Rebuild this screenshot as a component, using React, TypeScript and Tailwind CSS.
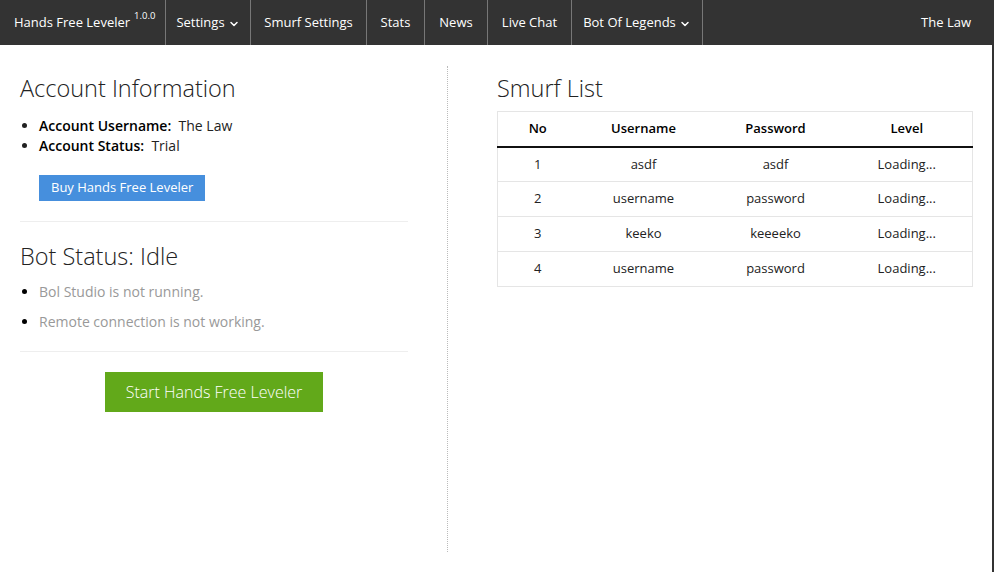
import React from 'react';
import { ChevronDown } from 'lucide-react';

const font = { fontFamily: '"Open Sans", "Noto Sans", sans-serif' };

const smurfs = [
  { no: 1, username: 'asdf', password: 'asdf' },
  { no: 2, username: 'username', password: 'password' },
  { no: 3, username: 'keeko', password: 'keeeeko' },
  { no: 4, username: 'username', password: 'password' },
];

const NavItem: React.FC<{ w: string; label: string; caret?: boolean }> = ({ w, label, caret }) => (
  <div className={`${w} h-full flex items-center justify-center border-r border-[#777] text-[13px] text-white`}>
    {label}
    {caret && <ChevronDown size={12} strokeWidth={3} className="ml-[3px] mt-[3px]" />}
  </div>
);

const App: React.FC = () => {
  return (
    <div className="w-[994px] h-[572px] bg-white border-r-2 border-[#333] overflow-hidden" style={font}>
      {/* top nav */}
      <div className="h-[45px] bg-[#333] flex items-center">
        <div className="w-[166px] h-full flex items-center pl-[14px] border-r border-[#777] text-[13px] text-white">
          Hands Free Leveler <sup className="text-[9.5px] ml-[4px] -mt-[3px]">1.0.0</sup>
        </div>
        <NavItem w="w-[85px]" label="Settings" caret />
        <NavItem w="w-[116px]" label="Smurf Settings" />
        <NavItem w="w-[58px]" label="Stats" />
        <NavItem w="w-[63px]" label="News" />
        <NavItem w="w-[84px]" label="Live Chat" />
        <NavItem w="w-[131px]" label="Bot Of Legends" caret />
        <div className="flex-1 h-full flex items-center justify-end pr-[21px] text-[13px] text-white">The Law</div>
      </div>

      <div className="flex pt-[21px]">
        {/* left column */}
        <div className="w-[448px] shrink-0 pl-[20px] pr-[39px] border-r border-dotted border-[#bbb] h-[486px]">
          <h2 className="text-[23.5px] font-light text-[#222] leading-[34px] mt-[5px]">Account Information</h2>
          <ul className="mt-[11px] pl-[19px] list-disc text-[14px] leading-[20px] text-[#222]">
            <li><span className="font-semibold text-black">Account Username:</span>&nbsp; The Law</li>
            <li><span className="font-semibold text-black">Account Status:</span>&nbsp; Trial</li>
          </ul>
          <div className="pl-[19px] mt-[18px]">
            <button className="h-[26px] px-[12px] bg-[#468fdd] text-white text-[13px]">Buy Hands Free Leveler</button>
          </div>
          <div className="mt-[20px] border-t border-[#eee]" />

          <h2 className="text-[23.5px] font-light text-[#222] leading-[34px] mt-[17px]">Bot Status: Idle</h2>
          <ul className="mt-[4px] pl-[19px] list-disc text-[14px] leading-[30px] text-[#999] marker:text-black">
            <li>Bol Studio is not running.</li>
            <li>Remote connection is not working.</li>
          </ul>
          <div className="mt-[14px] border-t border-[#eee]" />
          <div className="flex justify-center mt-[20px]">
            <button className="w-[218px] h-[40px] bg-[#62a91a] text-white text-[16px] font-light">Start Hands Free Leveler</button>
          </div>
        </div>

        {/* right column */}
        <div className="flex-1 pl-[49px] pr-[21px]">
          <h2 className="text-[23.5px] font-light text-[#222] leading-[34px] mt-[5px]">Smurf List</h2>
          <table className="w-[476px] mt-[6px] border border-[#e5e5e5] text-[13px] text-[#222] text-center border-collapse">
            <thead>
              <tr className="h-[35px] border-b-2 border-[#111]">
                <th className="w-[80px] font-semibold text-black">No</th>
                <th className="w-[132px] font-semibold text-black">Username</th>
                <th className="w-[132px] font-semibold text-black">Password</th>
                <th className="font-semibold text-black">Level</th>
              </tr>
            </thead>
            <tbody>
              {smurfs.map((s) => (
                <tr key={s.no} className="h-[35px] border-t border-[#e5e5e5]">
                  <td>{s.no}</td>
                  <td>{s.username}</td>
                  <td>{s.password}</td>
                  <td>Loading...</td>
                </tr>
              ))}
            </tbody>
          </table>
        </div>
      </div>
    </div>
  );
};

export default App;
